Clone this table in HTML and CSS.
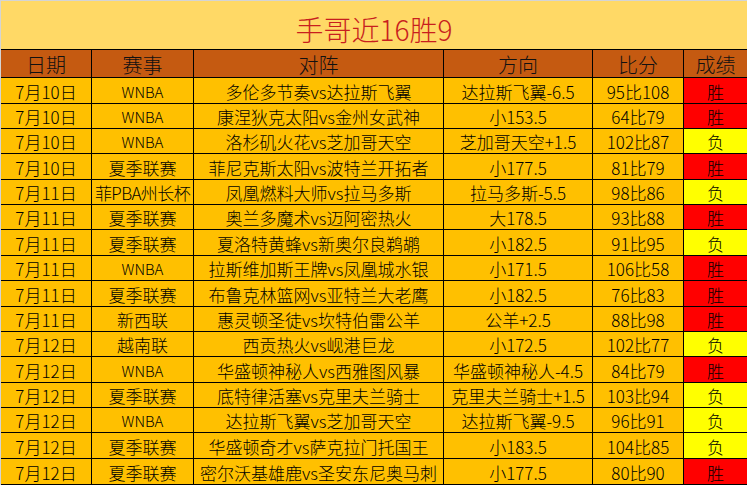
FILE: index.html
```html
<!DOCTYPE html>
<html lang="zh-CN">
<head>
<meta charset="utf-8">
<title>手哥近16胜9</title>
<link rel="stylesheet" href="styles.css">
</head>
<body>
<div class="sheet">
  <div class="title">手哥近16胜9</div>
  <div class="grid head">
    <div class="c">日期</div><div class="c">赛事</div><div class="c">对阵</div><div class="c">方向</div><div class="c">比分</div><div class="c last">成绩</div>
  </div>
  <div class="grid body">
    <div class="c">7月10日</div><div class="c lat">WNBA</div><div class="c">多伦多节奏vs达拉斯飞翼</div><div class="c">达拉斯飞翼-6.5</div><div class="c">95比108</div><div class="c last win">胜</div>
    <div class="c">7月10日</div><div class="c lat">WNBA</div><div class="c">康涅狄克太阳vs金州女武神</div><div class="c">小153.5</div><div class="c">64比79</div><div class="c last win">胜</div>
    <div class="c">7月10日</div><div class="c lat">WNBA</div><div class="c">洛杉矶火花vs芝加哥天空</div><div class="c">芝加哥天空+1.5</div><div class="c">102比87</div><div class="c last lose">负</div>
    <div class="c">7月10日</div><div class="c">夏季联赛</div><div class="c">菲尼克斯太阳vs波特兰开拓者</div><div class="c">小177.5</div><div class="c">81比79</div><div class="c last win">胜</div>
    <div class="c">7月11日</div><div class="c tight">菲PBA州长杯</div><div class="c">凤凰燃料大师vs拉马多斯</div><div class="c">拉马多斯-5.5</div><div class="c">98比86</div><div class="c last lose">负</div>
    <div class="c">7月11日</div><div class="c">夏季联赛</div><div class="c">奥兰多魔术vs迈阿密热火</div><div class="c">大178.5</div><div class="c">93比88</div><div class="c last win">胜</div>
    <div class="c">7月11日</div><div class="c">夏季联赛</div><div class="c">夏洛特黄蜂vs新奥尔良鹈鹕</div><div class="c">小182.5</div><div class="c">91比95</div><div class="c last lose">负</div>
    <div class="c">7月11日</div><div class="c lat">WNBA</div><div class="c">拉斯维加斯王牌vs凤凰城水银</div><div class="c">小171.5</div><div class="c">106比58</div><div class="c last win">胜</div>
    <div class="c">7月11日</div><div class="c">夏季联赛</div><div class="c">布鲁克林篮网vs亚特兰大老鹰</div><div class="c">小182.5</div><div class="c">76比83</div><div class="c last win">胜</div>
    <div class="c">7月11日</div><div class="c">新西联</div><div class="c">惠灵顿圣徒vs坎特伯雷公羊</div><div class="c">公羊+2.5</div><div class="c">88比98</div><div class="c last win">胜</div>
    <div class="c">7月12日</div><div class="c">越南联</div><div class="c">西贡热火vs岘港巨龙</div><div class="c">小172.5</div><div class="c">102比77</div><div class="c last lose">负</div>
    <div class="c">7月12日</div><div class="c lat">WNBA</div><div class="c">华盛顿神秘人vs西雅图风暴</div><div class="c">华盛顿神秘人-4.5</div><div class="c">84比79</div><div class="c last win">胜</div>
    <div class="c">7月12日</div><div class="c">夏季联赛</div><div class="c">底特律活塞vs克里夫兰骑士</div><div class="c">克里夫兰骑士+1.5</div><div class="c">103比94</div><div class="c last lose">负</div>
    <div class="c">7月12日</div><div class="c lat">WNBA</div><div class="c">达拉斯飞翼vs芝加哥天空</div><div class="c">达拉斯飞翼-9.5</div><div class="c">96比91</div><div class="c last lose">负</div>
    <div class="c">7月12日</div><div class="c">夏季联赛</div><div class="c">华盛顿奇才vs萨克拉门托国王</div><div class="c">小183.5</div><div class="c">104比85</div><div class="c last lose">负</div>
    <div class="c">7月12日</div><div class="c">夏季联赛</div><div class="c">密尔沃基雄鹿vs圣安东尼奥马刺</div><div class="c">小177.5</div><div class="c">80比90</div><div class="c last win">胜</div>
  </div>
</div>
</body>
</html>
```

FILE: styles.css
```css
html, body {
  margin: 0;
  padding: 0;
  background: #d4d4d4;
}
body {
  width: 747px;
  height: 485px;
  overflow: hidden;
  font-family: "Noto Sans CJK SC", "Noto Sans", sans-serif;
  font-weight: 300;
  color: #000;
}
.sheet {
  padding: 1px 0 0 1px;
}
.title {
  height: 49px;
  box-sizing: border-box;
  padding-top: 8px;
  background: #ffd966;
  color: #c81e1e;
  font-size: 28px;
  line-height: 40px;
  text-align: center;
  border-bottom: 1px solid #000;
}
.grid {
  display: grid;
  grid-template-columns: 91px 102px 250px 149px 91px 1fr;
}
.c {
  box-sizing: border-box;
  border-right: 1px solid #000;
  border-bottom: 1px solid #000;
  display: flex;
  align-items: center;
  justify-content: center;
  white-space: nowrap;
  line-height: 20px;
}
.c.last {
  border-right: none;
}
.head {
  grid-template-rows: 28px;
  background: #c55a11;
}
.head .c {
  font-size: 20px;
  line-height: 22px;
  padding-top: 3px;
  color: #111;
}
.body {
  grid-template-rows: 26px 25px 25px 26px 25px 25px 26px 25px 26px 25px 25px 26px 25px 25px 26px 26px;
  background: #ffc000;
  font-size: 17px;
}
.body .c {
  padding-top: 2px;
}
.lat {
  font-size: 15px;
}
.tight {
  letter-spacing: -0.6px;
}
.win {
  background: #ff0000;
}
.lose {
  background: #ffff00;
}
```
